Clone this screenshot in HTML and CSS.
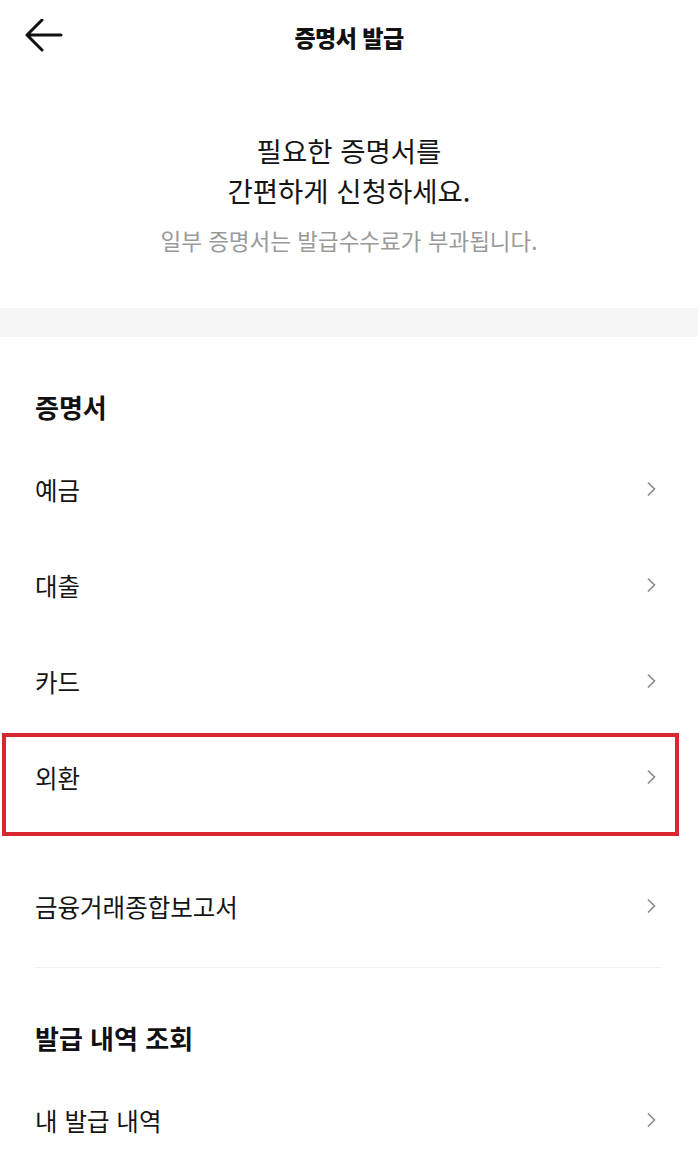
FILE: index.html
```html
<!DOCTYPE html>
<html lang="ko">
<head>
<meta charset="utf-8">
<title>증명서 발급</title>
<link rel="stylesheet" href="styles.css">
</head>
<body>
<div class="page">
  <header class="topbar">
    <button class="back" aria-label="뒤로">
      <svg width="40" height="40" viewBox="0 0 40 40"><path d="M3 16 H37 M18 1 L3 16 L18 31" fill="none" stroke="#111" stroke-width="3" stroke-linecap="round" stroke-linejoin="round"/></svg>
    </button>
    <h1 class="title">증명서 발급</h1>
    <span></span>
  </header>

  <section class="intro">
    <p class="intro-main">필요한 증명서를<br>간편하게 신청하세요.</p>
    <p class="intro-sub">일부 증명서는 발급수수료가 부과됩니다.</p>
  </section>

  <div class="band"></div>

  <section class="group">
    <h2 class="group-title">증명서</h2>
    <ul class="list">
      <li class="row"><span>예금</span><svg class="chev" width="12" height="16" viewBox="0 0 12 16"><path d="M3 1.5 L9.5 8 L3 14.5" fill="none" stroke="#8a8a8a" stroke-width="1.6"/></svg></li>
      <li class="row"><span>대출</span><svg class="chev" width="12" height="16" viewBox="0 0 12 16"><path d="M3 1.5 L9.5 8 L3 14.5" fill="none" stroke="#8a8a8a" stroke-width="1.6"/></svg></li>
      <li class="row"><span>카드</span><svg class="chev" width="12" height="16" viewBox="0 0 12 16"><path d="M3 1.5 L9.5 8 L3 14.5" fill="none" stroke="#8a8a8a" stroke-width="1.6"/></svg></li>
      <li class="highlight">
        <div class="row row-inner"><span>외환</span><svg class="chev" width="12" height="16" viewBox="0 0 12 16"><path d="M3 1.5 L9.5 8 L3 14.5" fill="none" stroke="#8a8a8a" stroke-width="1.6"/></svg></div>
      </li>
      <li class="row"><span>금융거래종합보고서</span><svg class="chev" width="12" height="16" viewBox="0 0 12 16"><path d="M3 1.5 L9.5 8 L3 14.5" fill="none" stroke="#8a8a8a" stroke-width="1.6"/></svg></li>
    </ul>
    <div class="divider"></div>
  </section>

  <section class="group">
    <h2 class="group-title">발급 내역 조회</h2>
    <ul class="list">
      <li class="row"><span>내 발급 내역</span><svg class="chev" width="12" height="16" viewBox="0 0 12 16"><path d="M3 1.5 L9.5 8 L3 14.5" fill="none" stroke="#8a8a8a" stroke-width="1.6"/></svg></li>
    </ul>
  </section>
</div>
</body>
</html>
```

FILE: styles.css
```css
* { box-sizing: border-box; }
html, body { margin: 0; padding: 0; background: #fff; }
body {
  font-family: "Noto Sans CJK KR", "Noto Sans", sans-serif;
  color: #111;
}
.page { width: 698px; overflow: hidden; }

.topbar {
  height: 74px;
  display: grid;
  grid-template-columns: 1fr auto 1fr;
  align-items: center;
}
.back {
  border: 0;
  background: none;
  padding: 0;
  margin-left: 24px;
  width: 40px;
  height: 40px;
  display: flex;
  align-items: center;
  justify-self: start;
  margin-top: 4px;
}
.title {
  margin: 0;
  font-size: 23px;
  font-weight: 900;
  line-height: 40px;
  letter-spacing: -0.5px;
}

.intro {
  padding: 56px 0 53px;
  text-align: center;
}
.intro-main {
  margin: 0;
  font-size: 27.5px;
  line-height: 40px;
  color: #151515;
}
.intro-sub {
  margin: 15px 0 0;
  font-size: 22.5px;
  line-height: 30px;
  color: #9a9a9a;
}

.band { height: 29px; background: #f6f6f6; }

.group { padding-top: 46px; }
.group-title {
  margin: 0;
  padding: 0 35px 10px;
  font-size: 26px;
  font-weight: 700;
  line-height: 48px;
}
.list { list-style: none; margin: 0; padding: 0; }
.row {
  height: 96px;
  display: flex;
  align-items: center;
  justify-content: space-between;
  padding: 0 41px 0 35px;
  font-size: 24.5px;
  color: #151515;
}
.chev { flex: none; }

.highlight {
  border: 4px solid #d9262f;
  margin: 4px 19px 22px 2px;
  padding-bottom: 15px;
}
.row-inner {
  height: 80px;
  padding: 0 18px 0 29px;
}

.divider {
  height: 1px;
  background: #f0f0f0;
  margin: 13px 36px 0 35px;
}
```
